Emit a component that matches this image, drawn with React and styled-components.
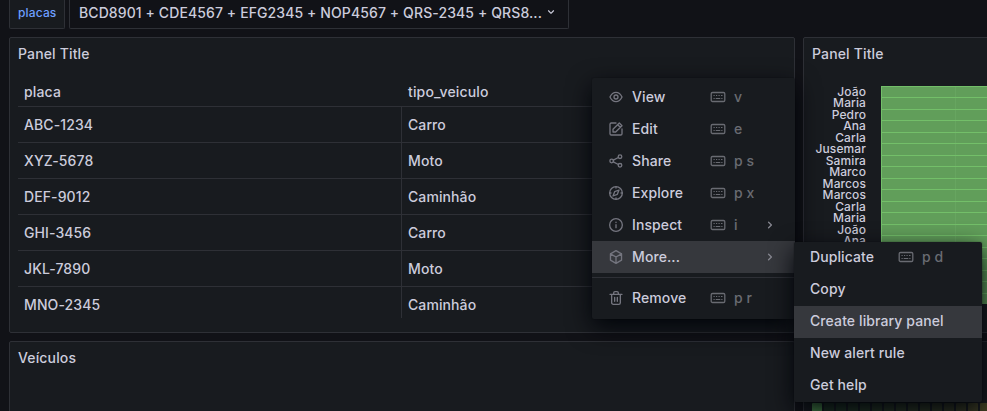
import React from "react";
import styled, { createGlobalStyle } from "styled-components";

const line = "#2e3036";

const GlobalStyle = createGlobalStyle`
  * { box-sizing: border-box; }
  body {
    margin: 0;
    overflow: hidden;
    background: #111217;
    color: #ccccdc;
    font: 450 14px/22px Inter, "Liberation Sans", sans-serif;
    letter-spacing: 0.1px;
  }
`;

const Page = styled.div`
  position: relative;
  width: 987px;
  height: 411px;
  overflow: hidden;
  padding-left: 9px;
`;

const Controls = styled.div`
  display: flex;
  gap: 4px;
  height: 37px;
  padding-bottom: 8px;
`;

const VariableLabel = styled.div`
  width: 56px;
  padding: 4px 0 0 8px;
  font-size: 12px;
  line-height: 18px;
  font-weight: 500;
  letter-spacing: 0.15px;
  color: #6e9fff;
  background: #181b1f;
  border: 1px solid ${line};
  border-top: 0;
  border-radius: 0 0 2px 2px;
`;

const VariableSelect = styled.div`
  display: flex;
  align-items: flex-start;
  width: 500px;
  padding: 2px 10px 0 9px;
  white-space: nowrap;
  border: 1px solid ${line};
  border-top: 0;
  border-radius: 0 0 2px 2px;
  svg { margin: 3px 0 0 auto; color: #ccccdc; }
`;

const SelectText = styled.span`
  width: 465px;
`;

const Grid = styled.div`
  display: grid;
  grid-template-columns: 786px 300px;
  grid-template-rows: 296px 100px;
  gap: 8px;
`;

const Panel = styled.section`
  display: flex;
  flex-direction: column;
  overflow: hidden;
  background: #181b1f;
  border: 1px solid ${line};
  border-radius: 2px;
`;

const PanelTitle = styled.h2`
  margin: 0;
  padding: 5px 8px;
  font-size: 14px;
  line-height: 22px;
  font-weight: 500;
  letter-spacing: 0.15px;
`;

const Table = styled.div`
  margin: 7px 8px 0;
  height: 241px;
  overflow: hidden;
`;

const TableRow = styled.div`
  display: grid;
  grid-template-columns: 384px 1fr;
  height: 36px;
  border-bottom: 1px solid ${line};
  &:last-child { border-bottom: 0; }
`;

const HeaderRow = styled(TableRow)`
  height: 30px;
  font-weight: 500;
  letter-spacing: 0.15px;
`;

const Cell = styled.div`
  padding: ${(p) => (p.$header ? "4px 6px" : "7px 6px")};
  border-right: ${(p) => (p.$divided ? `1px solid ${line}` : "0")};
`;

const ChartBody = styled.div`
  display: grid;
  grid-template-columns: 62px 1fr;
  grid-template-rows: 218px;
  column-gap: 15px;
  margin-top: 16px;
  height: 218px;
`;

const Names = styled.div`
  display: grid;
  grid-template-rows: repeat(19, minmax(0, 1fr));
  justify-items: end;
  font-size: 12px;
  line-height: 11.4px;
`;

const BarStack = styled.div`
  display: grid;
  grid-template-rows: repeat(19, minmax(0, 1fr));
  background: linear-gradient(#67a560, #67a560) 74px 0 / 1px 100% no-repeat #619e5a;
`;

const Bar = styled.div`
  border: solid #73bf69;
  border-width: 1px 0 0 1px;
`;

const Timeline = styled.div`
  display: flex;
  gap: 2px;
  margin: 61px 0 0 8px;
  height: 30px;
`;

const TimeCell = styled.div`
  flex: 0 0 10px;
  background: ${(p) => p.$color};
  border-radius: 1px;
`;

const Menu = styled.div`
  position: absolute;
  left: ${(p) => p.$x}px;
  top: ${(p) => p.$y}px;
  width: ${(p) => p.$width}px;
  padding: ${(p) => p.$pad};
  background: #181b1f;
  border-radius: 2px;
  box-shadow: 0 0 0 1px rgba(0, 0, 0, 0.08), 0 8px 24px rgb(1, 4, 9);
`;

const MenuItem = styled.div`
  display: flex;
  align-items: center;
  height: 32px;
  padding: 0 16px ${(p) => (p.$raised ? "2px" : "0")};
  font-weight: 500;
  background: ${(p) => (p.$active ? "#36383d" : "transparent")};
`;

const ItemIcon = styled.span`
  display: flex;
  width: 24px;
  color: #74757f;
`;

const ItemLabel = styled.span`
  width: ${(p) => p.$width}px;
  white-space: nowrap;
`;

const Shortcut = styled.span`
  display: flex;
  align-items: center;
  gap: 8px;
  font-weight: 450;
  color: #696b72;
`;

const Arrow = styled.span`
  display: flex;
  margin-left: auto;
  padding-right: 1px;
  color: #85868f;
`;

const Divider = styled.div`
  height: 1px;
  margin: 4px 0;
  background: ${line};
`;

const paths = {
  eye: "M21.92,11.6C19.9,6.91,16.1,4,12,4S4.1,6.91,2.08,11.6a1,1,0,0,0,0,.8C4.1,17.09,7.9,20,12,20s7.9-2.91,9.92-7.6A1,1,0,0,0,21.92,11.6ZM12,18c-3.17,0-6.17-2.29-7.9-6C5.83,8.29,8.83,6,12,6s6.17,2.29,7.9,6C18.17,15.71,15.17,18,12,18ZM12,8a4,4,0,1,0,4,4A4,4,0,0,0,12,8Zm0,6a2,2,0,1,1,2-2A2,2,0,0,1,12,14Z",
  right: "M14.83,11.29,10.59,7.05a1,1,0,0,0-1.42,0,1,1,0,0,0,0,1.41L12.71,12,9.17,15.54a1,1,0,0,0,0,1.41,1,1,0,0,0,.71.29,1,1,0,0,0,.71-.29l4.24-4.24A1,1,0,0,0,14.83,11.29Z",
  down: "M17,9.17a1,1,0,0,0-1.41,0L12,12.71,8.46,9.17a1,1,0,0,0-1.41,0,1,1,0,0,0,0,1.42l4.24,4.24a1,1,0,0,0,1.42,0L17,10.59A1,1,0,0,0,17,9.17Z",
};

const strokes = {
  edit: (
    <>
      <path d="M12 3H5a2 2 0 0 0-2 2v14a2 2 0 0 0 2 2h14a2 2 0 0 0 2-2v-7" />
      <path d="M7.5 16.5v-4L17 3l4 4-9.500 9.500Z M14.500 5.500l4 4" />
    </>
  ),
  share: (
    <>
      <circle cx="5.500" cy="12" r="2.700" />
      <circle cx="18" cy="5.500" r="2.700" />
      <circle cx="18" cy="18.500" r="2.700" />
      <path d="m8 10.800 7.500-4M8 13.200l7.500 4" />
    </>
  ),
  explore: (
    <>
      <circle cx="12" cy="12" r="9.500" />
      <path d="m16.500 7.500-2.500 6.500-6.500 2.500L10 10Z M12 2.500v2M12 19.500v2M2.500 12h2M19.500 12h2" />
    </>
  ),
  inspect: (
    <>
      <circle cx="12" cy="12" r="9.500" />
      <path d="M12 11.500v4.500M12 7.800v.4" />
    </>
  ),
  cube: <path d="m12 2.500 8.300 4.700v9.600L12 21.500l-8.300-4.700V7.200Z M3.700 7.200 12 12l8.300-4.800M12 12v9.500" />,
  trash: <path d="M3 6.500h18M5.500 6.500V19a2.500 2.500 0 0 0 2.500 2.500h8a2.500 2.500 0 0 0 2.500-2.500V6.500M8.500 6V4.500a2 2 0 0 1 2-2h3a2 2 0 0 1 2 2V6M10 11v6M14 11v6" />,
};

function Icon({ name, size = 16 }) {
  if (paths[name]) {
    return (
      <svg width={size} height={size} viewBox="0 0 24 24" fill="currentColor">
        <path d={paths[name]} />
      </svg>
    );
  }
  return (
    <svg width={size} height={size} viewBox="0 0 24 24" fill="none" stroke="currentColor" strokeWidth="2" strokeLinejoin="round" strokeLinecap="round">
      {strokes[name]}
    </svg>
  );
}

function KeyboardIcon() {
  return (
    <svg width="16" height="16" viewBox="0 0 16 16" fill="none" stroke="currentColor">
      <rect x="1.200" y="3.500" width="13.600" height="9" rx="1.300" strokeWidth="1.300" />
      <path d="M3.500 6.500h1.200M6 6.500h1.200M8.500 6.500h1.200M11 6.500h1.500M3.500 9.500h1.200M5.700 9.500h4.600M11.300 9.500h1.200" strokeWidth="1.200" />
    </svg>
  );
}

function Item({ icon, label, keys, arrow, active, raised, labelWidth = 78 }) {
  return (
    <MenuItem $active={active} $raised={raised}>
      {icon && <ItemIcon><Icon name={icon} /></ItemIcon>}
      <ItemLabel $width={labelWidth}>{label}</ItemLabel>
      {keys && <Shortcut><KeyboardIcon />{keys}</Shortcut>}
      {arrow && <Arrow><Icon name="right" /></Arrow>}
    </MenuItem>
  );
}

const vehicles = [
  ["ABC-1234", "Carro"],
  ["XYZ-5678", "Moto"],
  ["DEF-9012", "Caminhão"],
  ["GHI-3456", "Carro"],
  ["JKL-7890", "Moto"],
  ["MNO-2345", "Caminhão"],
];

const people = ["João", "Maria", "Pedro", "Ana", "Carla", "Jusemar", "Samira", "Marco", "Marcos", "Marcos", "Carla", "Maria", "João", "Ana"];

const bars = Array.from({ length: 19 }, (_, i) => i);

const timeline = ["#4b8a4b", "#1f3324", "#203324", "#223324", "#243424", "#263424", "#283424", "#2a3524", "#2c3524", "#2e3624", "#303624", "#333724", "#383a24", "#3d3d24", "#454424"];

export default function App() {
  return (
    <Page>
      <GlobalStyle />
      <Controls>
        <VariableLabel>placas</VariableLabel>
        <VariableSelect>
          <SelectText>BCD8901 + CDE4567 + EFG2345 + NOP4567 + QRS-2345 + QRS8...</SelectText>
          <Icon name="down" size={14} />
        </VariableSelect>
      </Controls>
      <Grid>
        <Panel>
          <PanelTitle>Panel Title</PanelTitle>
          <Table>
            <HeaderRow>
              <Cell $header>placa</Cell>
              <Cell $header>tipo_veiculo</Cell>
            </HeaderRow>
            {vehicles.map(([plate, type]) => (
              <TableRow key={plate}>
                <Cell $divided>{plate}</Cell>
                <Cell>{type}</Cell>
              </TableRow>
            ))}
          </Table>
        </Panel>
        <Panel>
          <PanelTitle>Panel Title</PanelTitle>
          <ChartBody>
            <Names>{people.map((name, i) => <span key={i}>{name}</span>)}</Names>
            <BarStack>{bars.map((i) => <Bar key={i} />)}</BarStack>
          </ChartBody>
        </Panel>
        <Panel>
          <PanelTitle>Veículos</PanelTitle>
        </Panel>
        <Panel>
          <Timeline>{timeline.map((color) => <TimeCell key={color} $color={color} />)}</Timeline>
        </Panel>
      </Grid>
      <Menu $x={592} $y={78} $width={203} $pad="3px 0 5px">
        <Item icon="eye" label="View" keys="v" />
        <Item icon="edit" label="Edit" keys="e" />
        <Item icon="share" label="Share" keys="p s" />
        <Item icon="explore" label="Explore" keys="p x" />
        <Item icon="inspect" label="Inspect" keys="i" arrow />
        <Item icon="cube" label="More..." arrow active />
        <Divider />
        <Item icon="trash" label="Remove" keys="p r" />
      </Menu>
      <Menu $x={794} $y={242} $width={188} $pad="0">
        <Item raised label="Duplicate" keys="p d" labelWidth={88} />
        <Item raised label="Copy" />
        <Item raised label="Create library panel" active />
        <Item raised label="New alert rule" />
        <Item raised label="Get help" />
      </Menu>
    </Page>
  );
}
